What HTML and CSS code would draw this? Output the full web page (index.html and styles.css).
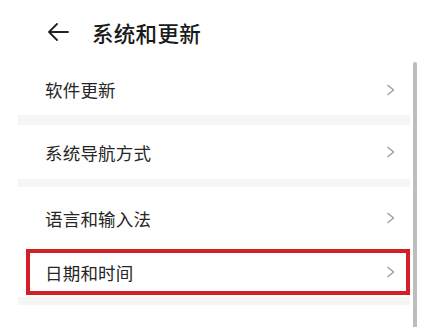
FILE: index.html
```html
<!DOCTYPE html>
<html lang="zh-CN">
<head>
<meta charset="utf-8">
<link rel="stylesheet" href="styles.css">
</head>
<body>
<div class="screen">
  <header class="header">
    <svg class="back" width="22" height="18" viewBox="0 0 22 18"><path d="M21 9H2M10 1L2 9l8 8" fill="none" stroke="#222" stroke-width="1.8" stroke-linecap="round" stroke-linejoin="round"/></svg>
    <h1 class="title">系统和更新</h1>
  </header>
  <div class="body">
    <div class="list">
      <div class="row r1"><span class="label">软件更新</span><svg class="chev" width="9" height="12" viewBox="0 0 9 12"><path d="M1.5 1l6 5-6 5" fill="none" stroke="#9a9a9a" stroke-width="1.3"/></svg></div>
      <div class="band b1"></div>
      <div class="row r2"><span class="label">系统导航方式</span><svg class="chev" width="9" height="12" viewBox="0 0 9 12"><path d="M1.5 1l6 5-6 5" fill="none" stroke="#9a9a9a" stroke-width="1.3"/></svg></div>
      <div class="band b2"></div>
      <div class="row r3"><span class="label">语言和输入法</span><svg class="chev" width="9" height="12" viewBox="0 0 9 12"><path d="M1.5 1l6 5-6 5" fill="none" stroke="#9a9a9a" stroke-width="1.3"/></svg></div>
      <div class="row r4"><span class="label">日期和时间</span><svg class="chev" width="9" height="12" viewBox="0 0 9 12"><path d="M1.5 1l6 5-6 5" fill="none" stroke="#9a9a9a" stroke-width="1.3"/></svg><div class="highlight"></div></div>
      <div class="band b3"></div>
      <div class="row r5"><span class="label">手机克隆</span><svg class="chev" width="9" height="12" viewBox="0 0 9 12"><path d="M1.5 1l6 5-6 5" fill="none" stroke="#9a9a9a" stroke-width="1.3"/></svg></div>
    </div>
    <div class="scrollbar"></div>
  </div>
</div>
</body>
</html>
```
FILE: styles.css
```css
html, body {
  margin: 0;
  padding: 0;
  background: #ffffff;
  overflow: hidden;
}
.screen {
  width: 432px;
  height: 327px;
  overflow: hidden;
  font-family: "Noto Sans CJK SC", "Noto Sans", sans-serif;
  color: #222;
}
.header {
  height: 62px;
  display: flex;
  align-items: center;
  padding-left: 47px;
  gap: 23px;
  box-sizing: border-box;
  padding-bottom: 0;
}
.back {
  display: block;
  margin-top: 1px;
}
.title {
  margin: 0;
  font-size: 21.5px;
  font-weight: 500;
  color: #1a1a1a;
  letter-spacing: 0.3px;
  line-height: 1;
  margin-top: 3px;
}
.body {
  display: flex;
  padding-left: 18px;
  height: 265px;
}
.list {
  width: 392px;
  display: flex;
  flex-direction: column;
}
.row {
  position: relative;
  display: flex;
  align-items: center;
  justify-content: space-between;
  padding-left: 27px;
  padding-right: 15px;
  flex: none;
}
.r1 { height: 53px; padding-top: 2px; box-sizing: border-box; }
.r2 { height: 54px; }
.r3 { height: 60px; padding-top: 2px; box-sizing: border-box; }
.r4 { height: 50px; }
.r5 { height: 54px; }
.label {
  font-size: 17.5px;
  color: #262626;
  letter-spacing: 0.2px;
}
.chev {
  display: block;
}
.band {
  flex: none;
  background: #f5f5f5;
}
.b1 { height: 10px; }
.b2 { height: 8px; }
.b3 { height: 8px; }
.r5 .label { margin-top: 32px; }
.r5 .chev { margin-top: 32px; }
.highlight {
  position: absolute;
  left: 8px;
  right: 0;
  top: 2px;
  bottom: 2px;
  border: 4px solid #d31f25;
  box-sizing: border-box;
}
.scrollbar {
  width: 4px;
  margin-left: 3px;
  background: #bdbdbd;
  border-radius: 2px 2px 0 0;
  height: 265px;
}
```
